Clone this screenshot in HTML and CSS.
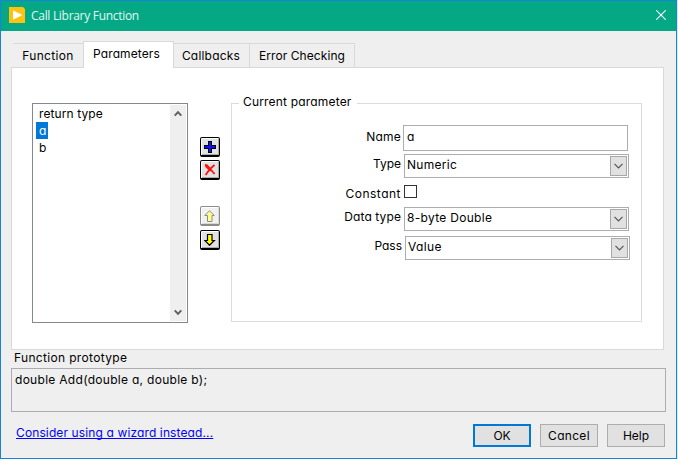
FILE: index.html
```html
<!DOCTYPE html>
<html lang="en">
<head>
<meta charset="utf-8">
<title>Call Library Function</title>
<link rel="stylesheet" href="styles.css">
</head>
<body>
<div class="window">
  <header class="titlebar">
    <svg class="app-icon" width="16" height="16" viewBox="0 0 16 16"><path d="M0 0h14l2 2v14H0z" fill="#ffc20e"/><path d="M4 4.2Q4 3.4 4.8 3.7L12.6 7.5Q13.4 8 12.6 8.5L4.8 12.3Q4 12.6 4 11.8z" fill="#fff"/></svg>
    <h1 class="title">Call Library Function</h1>
    <svg class="close" width="10" height="10" viewBox="0 0 10 10"><path d="M.3.3l9.4 9.4M9.7.3L.3 9.7" stroke="#fff" stroke-width="1.1"/></svg>
  </header>
  <nav class="tabs">
    <span class="tab tab-function">Function</span>
    <span class="tab tab-active">Parameters</span>
    <span class="tab tab-callbacks">Callbacks</span>
    <span class="tab tab-errors">Error Checking</span>
  </nav>
  <main class="panel">
    <div class="list">
      <ul class="items">
        <li><span class="item return-type">return type</span></li>
        <li><span class="item selected">a</span></li>
        <li><span class="item">b</span></li>
      </ul>
      <div class="scrollbar">
        <svg width="8" height="7" viewBox="0 0 8 7"><path d="M.7 5.6L4 2.1l3.3 3.5" fill="none" stroke="#606060" stroke-width="2"/></svg>
        <svg width="8" height="7" viewBox="0 0 8 7"><path d="M.7 1.4L4 4.9l3.3-3.5" fill="none" stroke="#606060" stroke-width="2"/></svg>
      </div>
    </div>
    <div class="tools">
      <span class="tool"><svg width="12" height="12" viewBox="0 0 12 12"><path d="M4 0h4v4h4v4H8v4H4V8H0V4h4z" fill="#000"/><path d="M5 1h2v4h4v2H7v4H5V7H1V5h4z" fill="#1010ff"/></svg></span>
      <span class="tool"><svg width="12" height="12" viewBox="0 0 12 12"><path d="M1 .8L3 1.3 10.6 10M10.5 1L7 4.2 3.8 7.8 1.6 11M1.5 1.8L6 6.3" fill="none" stroke="#f11" stroke-width="1.8"/></svg></span>
      <span class="tool disabled tool-up"><svg width="12" height="12" viewBox="0 0 12 12"><path d="M5.5.8L10.3 5.5H8v6H3.5v-6H.8z" fill="#ff0" stroke="#000"/></svg></span>
      <span class="tool tool-down"><svg width="12" height="12" viewBox="0 0 12 12"><path d="M5.5 11.2L10.3 6.5H8v-6H3.5v6H.8z" fill="#ff0" stroke="#000" stroke-width="1.2"/></svg></span>
    </div>
    <section class="group">
      <h2 class="legend">Current parameter</h2>
      <div class="row row-name"><label class="l-name">Name</label><span class="field">a</span></div>
      <div class="row row-type"><label class="l-type">Type</label><span class="field select"><span class="v-type">Numeric</span><i class="drop"><svg width="9" height="6" viewBox="0 0 9 6"><path d="M.5.8l4 4 4-4" fill="none" stroke="#555" stroke-width="1.2"/></svg></i></span></div>
      <div class="row row-const"><label class="l-const">Constant</label><span class="check"></span></div>
      <div class="row row-data"><label class="l-data">Data type</label><span class="field select"><span class="v-data">8-byte Double</span><i class="drop"><svg width="9" height="6" viewBox="0 0 9 6"><path d="M.5.8l4 4 4-4" fill="none" stroke="#555" stroke-width="1.2"/></svg></i></span></div>
      <div class="row row-pass"><label class="l-pass">Pass</label><span class="field select"><span class="v-pass">Value</span><i class="drop"><svg width="9" height="6" viewBox="0 0 9 6"><path d="M.5.8l4 4 4-4" fill="none" stroke="#555" stroke-width="1.2"/></svg></i></span></div>
    </section>
  </main>
  <div class="proto-label">Function prototype</div>
  <div class="proto">double Add(double a, double b);</div>
  <footer class="footer">
    <a class="link">Consider using a wizard instead...</a>
    <button class="btn ok">OK</button>
    <button class="btn cancel">Cancel</button>
    <button class="btn help">Help</button>
  </footer>
</div>
</body>
</html>
```
FILE: styles.css
```css
* { box-sizing: border-box; }
body {
  margin: 0;
  background: #dceaf7;
  font: 12px/17px Inter, "Liberation Sans", sans-serif;
  font-feature-settings: "cv11";
  color: #000;
  white-space: nowrap;
}
.window {
  display: flex;
  flex-direction: column;
  width: 677px;
  height: 459px;
  border: 1px solid #1883d7;
  background: #efefef;
}
.titlebar {
  display: flex;
  align-items: center;
  height: 30px;
  padding: 0 10px 2px 8px;
  background: #04a885;
}
.title {
  flex: 1;
  margin: 0 0 0 6px;
  font: 12px/17px "Open Sans", sans-serif;
  letter-spacing: -0.3px;
  color: #e4f6f2;
}
.tabs {
  display: flex;
  align-items: flex-end;
  height: 36px;
  padding: 0 0 0 12px;
}
.tab {
  height: 24px;
  padding-top: 3px;
  border-top: 1px solid #d9d9d9;
  border-right: 1px solid #d9d9d9;
  text-align: center;
}
.tab-function { width: 70px; border-right: 0; letter-spacing: 0.35px; }
.tab-active {
  position: relative;
  width: 91px;
  height: 27px;
  margin-bottom: -1px;
  border-left: 1px solid #d9d9d9;
  background: #fff;
  padding: 3px 4px 0 0;
  letter-spacing: 0.1px;
}
.tab-callbacks { width: 76px; padding-right: 1px; letter-spacing: 0.2px; }
.tab-errors { width: 105px; letter-spacing: 0.07px; }
.panel {
  display: flex;
  align-items: flex-start;
  width: 653px;
  height: 283px;
  margin-left: 10px;
  padding: 35px 0 0 20px;
  border: 1px solid #d9d9d9;
  background: #fff;
}
.list {
  display: flex;
  width: 156px;
  height: 220px;
  padding: 1px;
  border: 1px solid #828790;
}
.items { flex: 1; margin: 0; padding: 0 0 0 2px; list-style: none; }
.items li { height: 17px; }
.item { display: inline-block; padding: 0 2px 0 3px; }
.return-type { letter-spacing: 0.1px; }
.selected { width: 12px; background: #0078d7; color: #fff; }
.scrollbar {
  display: flex;
  flex-direction: column;
  align-items: center;
  justify-content: space-between;
  width: 16px;
  padding: 5px 1px 5px 0;
  background: #efefef;
}
.tools { width: 20px; margin: 34px 0 0 12px; }
.tool {
  display: flex;
  align-items: center;
  justify-content: center;
  width: 20px;
  height: 20px;
  margin-bottom: 3px;
  border: 1px solid #000;
  border-bottom-width: 2px;
  border-radius: 2px;
  background: #e2e2e2;
  box-shadow: inset 1px 1px #fff, inset -1px -1px #aaa;
}
.tool-up { margin-top: 26px; margin-bottom: 4px; }
.disabled { opacity: .45; }
.group {
  width: 411px;
  height: 219px;
  margin-left: 11px;
  border: 1px solid #dcdcdc;
}
.legend {
  width: 118px;
  height: 17px;
  margin: -11px 0 0 7px;
  padding-left: 4px;
  background: #fff;
  font: inherit;
  letter-spacing: 0.18px;
}
.row { display: flex; }
.row label { width: 169px; text-align: right; }
.row-name { margin-top: 15px; }
.row-name label { padding-top: 3px; letter-spacing: 0.2px; }
.row-name .field { height: 26px; padding-top: 2px; margin-left: 2px; }
.row-type { margin-top: 3px; }
.row-type label { padding-top: 1px; }
.row-const { height: 22px; margin-top: 7px; }
.row .l-const { letter-spacing: 0.5px; }
.row-data label { padding-top: 1px; letter-spacing: 0.1px; }
.row-pass { margin-top: 5px; padding-left: 1px; }
.row-pass label { padding-top: 1px; }
.v-type { letter-spacing: 0.28px; }
.v-data { letter-spacing: 0.3px; }
.v-pass { letter-spacing: 0.4px; }
.field {
  display: flex;
  width: 225px;
  height: 24px;
  margin-left: 3px;
  padding-left: 3px;
  border: 1px solid #abadb3;
}
.select { justify-content: space-between; padding: 1px 1px 1px 2px; }
.drop {
  display: flex;
  align-items: center;
  justify-content: center;
  width: 17px;
  height: 20px;
  border: 1px solid #a8a8a8;
  background: #e1e1e1;
}
.check { width: 13px; height: 13px; margin-left: 3px; border: 1px solid #333; }
.proto-label { height: 18px; padding-left: 13px; line-height: 16px; letter-spacing: 0.33px; }
.proto {
  width: 655px;
  height: 44px;
  margin-left: 10px;
  padding: 2px 0 0 3px;
  border: 1px solid #abadb3;
  letter-spacing: 0.29px;
}
.footer { display: flex; gap: 9px; padding: 12px 0 0 15px; }
.link {
  width: 448px;
  color: #00f;
  letter-spacing: 0.12px;
  text-decoration: underline;
  text-decoration-skip-ink: none;
}
.btn {
  width: 58px;
  height: 23px;
  padding: 0;
  border: 1px solid #adadad;
  background: #e1e1e1;
  font: inherit;
  font-feature-settings: "cv11";
  color: #000;
}
.cancel { letter-spacing: 0.3px; }
.ok { border: 2px solid #0078d7; }
```
